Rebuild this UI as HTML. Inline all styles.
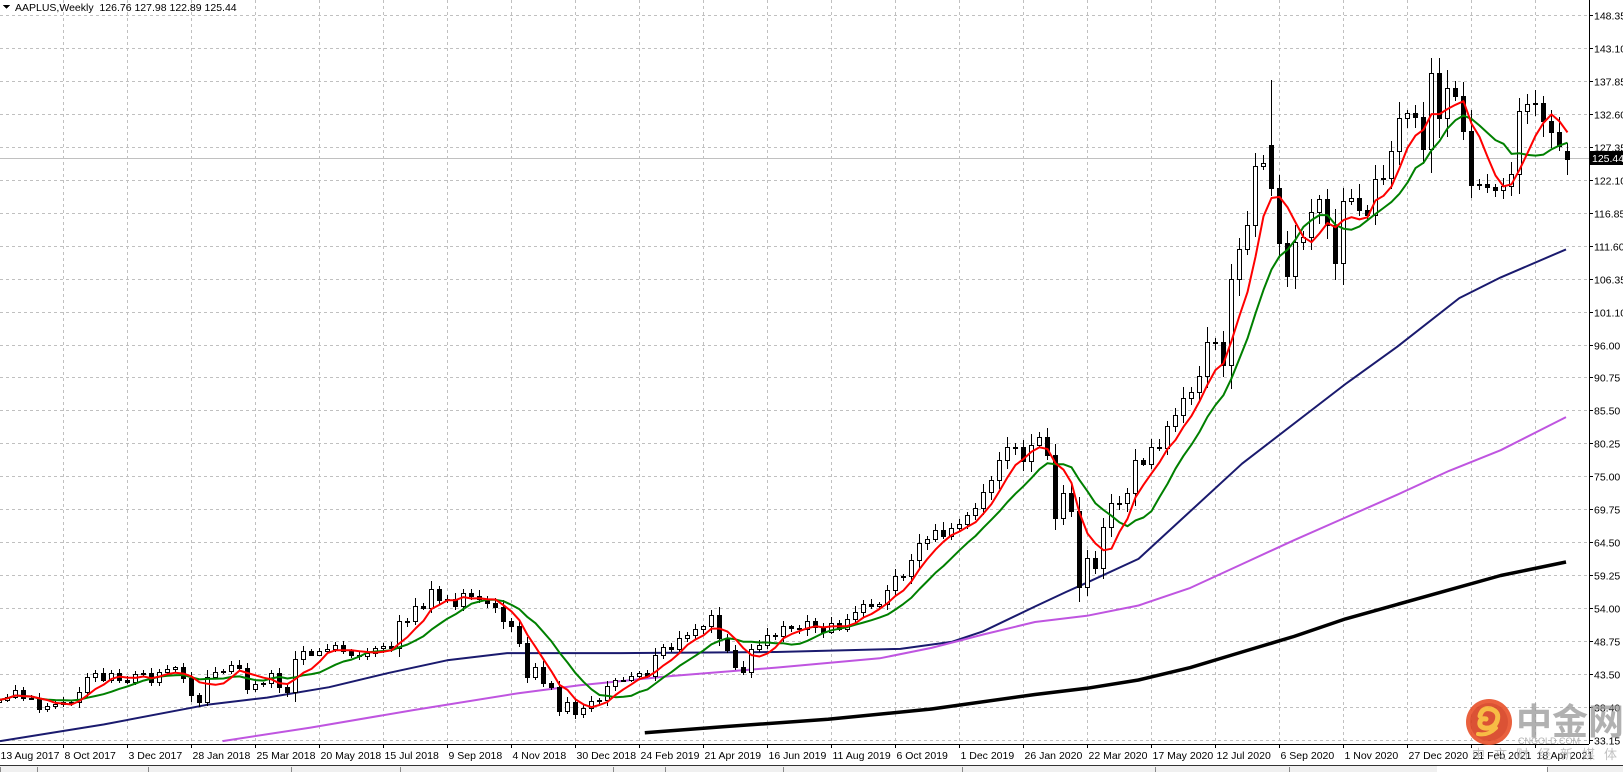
<!DOCTYPE html>
<html><head><meta charset="utf-8">
<style>
html,body{margin:0;padding:0;background:#fff;width:1623px;height:772px;overflow:hidden;font-family:"Liberation Sans",sans-serif}
svg{display:block}
text{font-family:"Liberation Sans",Tahoma,sans-serif;font-size:10.5px}
</style></head><body>
<svg id="s" width="1623" height="772" xmlns="http://www.w3.org/2000/svg" shape-rendering="crispEdges"></svg>
<script>
const C=[39.4,39.9,41.0,39.7,39.7,37.9,38.5,38.8,39.1,39.0,40.7,43.1,43.7,42.5,43.7,42.5,42.3,43.5,43.6,42.3,43.8,44.3,44.6,42.9,40.1,39.1,43.1,43.8,44.0,44.9,44.5,41.2,41.9,42.1,43.6,41.4,40.6,45.9,47.1,46.6,47.1,47.5,48.1,47.2,46.6,46.3,46.9,47.6,47.9,47.7,51.9,51.9,54.4,54.0,57.1,55.3,55.5,54.4,56.4,56.0,55.5,54.8,54.1,51.9,51.1,48.4,43.1,44.6,42.1,41.4,37.7,39.1,37.1,38.1,39.2,39.4,41.6,42.6,42.6,43.2,43.7,43.2,46.5,47.8,47.5,49.3,49.7,50.7,51.1,52.9,49.3,47.3,44.7,43.8,47.5,48.2,49.7,49.5,51.1,50.8,50.6,52.0,51.0,50.2,51.6,50.7,52.2,53.3,54.7,54.4,54.7,56.8,59.1,59.1,61.6,64.4,65.0,66.4,65.4,66.8,67.3,68.8,69.9,72.4,74.4,77.6,79.7,79.6,77.4,80.0,81.2,78.3,68.3,72.3,69.5,57.3,61.9,60.4,66.9,70.7,70.7,72.3,77.5,76.9,79.7,79.5,82.9,84.7,87.4,88.4,91.0,96.3,96.3,92.6,106.3,111.1,115.0,124.4,124.8,120.9,112.0,106.8,112.3,113.0,116.97,119.0,115.0,108.9,118.7,119.3,117.3,116.6,122.3,122.4,126.7,131.97,132.7,132.05,127.1,139.1,131.96,136.8,135.4,129.9,121.3,121.4,121.0,120.5,121.2,123.0,133.0,134.2,134.3,131.5,129.7,127.45,125.44];
const Y=p=>15+(148.35-p)*6.286;
const X=i=>-1+8*i;
const s=document.getElementById('s');
let h='';
const R=1589, B=744;
const prices=["148.35","143.10","137.85","132.60","127.35","122.10","116.85","111.60","106.35","101.10","96.00","90.75","85.50","80.25","75.00","69.75","64.50","59.25","54.00","48.75","43.50","38.40","33.15"];
prices.forEach((p,i)=>{const y=Math.round(15+32.95*i)+0.5;
 if(y<B)h+=`<line x1="0" y1="${y}" x2="${R}" y2="${y}" stroke="#c0c0c0" stroke-dasharray="3,3"/>`;
 h+=`<line x1="${R}" y1="${y}" x2="${R+4}" y2="${y}" stroke="#000"/>`;
 h+=`<text x="${R+5}" y="${y+4}" fill="#000">${p}</text>`;});
const dates=["13 Aug 2017","8 Oct 2017","3 Dec 2017","28 Jan 2018","25 Mar 2018","20 May 2018","15 Jul 2018","9 Sep 2018","4 Nov 2018","30 Dec 2018","24 Feb 2019","21 Apr 2019","16 Jun 2019","11 Aug 2019","6 Oct 2019","1 Dec 2019","26 Jan 2020","22 Mar 2020","17 May 2020","12 Jul 2020","6 Sep 2020","1 Nov 2020","27 Dec 2020","21 Feb 2021","18 Apr 2021"];
dates.forEach((d,k)=>{const x=-1+64*k+0.5;
 if(x>0)h+=`<line x1="${x}" y1="0" x2="${x}" y2="${B}" stroke="#c0c0c0" stroke-dasharray="3,3"/>`;
 h+=`<line x1="${x}" y1="${B}" x2="${x}" y2="${B+4}" stroke="#000"/>`;
 h+=`<text x="${Math.max(0,x+1)}" y="759" fill="#000">${d}</text>`;});
h+=`<line x1="0" y1="158.5" x2="${R}" y2="158.5" stroke="#c0c0c0"/>`;
function sma(n){return C.map((c,i)=>{let a=Math.max(0,i-n+1),s=0;for(let j=a;j<=i;j++)s+=C[j];return s/(i-a+1);});}
function poly(pts,col,w){return `<polyline fill="none" stroke="${col}" stroke-width="${w}" shape-rendering="auto" stroke-linejoin="round" points="${pts.map(p=>p[0].toFixed(1)+','+p[1].toFixed(1)).join(' ')}"/>`;}
const k=1.035;
const navy=[[0,716],[100,700],[200,681],[258,674],[318,664],[376,650],[432,638],[490,631],[600,631],[750,630],[870,627],[920,620],[950,610],[1000,586],[1030,572],[1050,563],[1100,540],[1200,448],[1300,371],[1350,335],[1410,288],[1450,268],[1513,241]].map(p=>[p[0]*k,p[1]*k]);
const purple=[[215,716],[300,703],[400,686],[500,670],[560,662],[650,653],[750,645],[850,636],[900,626],[950,613],[1000,601],[1050,595],[1100,585],[1150,568],[1200,545],[1250,522],[1300,500],[1350,478],[1400,455],[1450,435],[1513,403]].map(p=>[p[0]*k,p[1]*k]);
const black=[[623,708],[700,702],[800,695],[900,685],[1000,671],[1050,665],[1100,657],[1150,645],[1200,630],[1250,615],[1300,598],[1350,584],[1400,570],[1450,556],[1513,543]].map(p=>[p[0]*k,p[1]*k]);
h+=poly(navy,'#1a1a6e',2);
h+=poly(purple,'#bf55e0',2);
h+=poly(black,'#000',3.5);
let cs='';
C.forEach((c,i)=>{let o=i?C[i-1]:39.0;let hi,lo;const r1=((i*37)%11)/11,r2=((i*53)%13)/13;
 hi=Math.max(o,c)+(0.2+0.8*r1)*0.018*c+0.15*Math.abs(c-o);
 lo=Math.min(o,c)-(0.2+0.8*r2)*0.018*c-0.15*Math.abs(c-o);
 if(i==C.length-1){o=126.76;hi=127.98;lo=122.89;}
 if(i==159){o=127.6;hi=137.98;}
 const x=X(i)+0.5;
 cs+=`<line x1="${x}" y1="${Y(hi).toFixed(0)}" x2="${x}" y2="${Y(lo).toFixed(0)}" stroke="#000"/>`;
 let t=Math.round(Y(Math.max(o,c))),b=Math.round(Y(Math.min(o,c)));if(b-t<1)b=t+1;
 if(c>=o)cs+=`<rect x="${X(i)-2+0.5}" y="${t+0.5}" width="4" height="${b-t}" fill="#fff" stroke="#000"/>`;
 else cs+=`<rect x="${X(i)-2}" y="${t}" width="5" height="${b-t+1}" fill="#000"/>`;});
h+=cs;
const m5=sma(5).map((v,i)=>[X(i)+0.5,Y(v)]),m10=sma(10).map((v,i)=>[X(i)+0.5,Y(v)]);
h+=poly(m10,'#008000',2);
h+=poly(m5,'#ff0000',2);
h+=`<line x1="${R+0.5}" y1="0" x2="${R+0.5}" y2="${B}" stroke="#000"/>`;
h+=`<line x1="0" y1="${B+0.5}" x2="${R}" y2="${B+0.5}" stroke="#000"/>`;
h+=`<rect x="${R+1}" y="151" width="34" height="14" fill="#000"/><text x="${R+3}" y="162" fill="#fff">125.44</text>`;
h+=`<polygon points="3,5 10,5 6.5,9" fill="#000"/><text x="15" y="11" fill="#000">AAPLUS,Weekly&#160;&#160;126.76 127.98 122.89 125.44</text>`;
h+=`<line x1="0" y1="765.5" x2="1623" y2="765.5" stroke="#333"/><rect x="0" y="766" width="1623" height="6" fill="#f0f0f0"/>`;
[0,37,148,291,400,613,665,783,962,1155,1289,1437,1547].forEach(x=>{h+=`<line x1="${x+0.5}" y1="767" x2="${x+0.5}" y2="772" stroke="#888"/>`;});
h+=`<rect x="1437" y="766" width="110" height="6" fill="#fff"/>`;
h+=`<g shape-rendering="auto" opacity="0.9"><circle cx="1489" cy="722" r="23" fill="#e8502a"/><circle cx="1489" cy="722" r="19" fill="#d84020"/>
<path d="M1480 716 q2-9 11-7 q9 3 6 12 q-3 8-12 7 q-6-1-5-6 q1-4 6-3" fill="none" stroke="#f7b531" stroke-width="5" stroke-linecap="round"/>
<path d="M1478 734 q10 2 18-6" fill="none" stroke="#f7b531" stroke-width="4" stroke-linecap="round"/>
<text x="1516" y="734" style="font-family:'Noto Sans CJK SC','WenQuanYi Zen Hei',sans-serif;font-size:36px;font-weight:bold" fill="#9a9a9a" opacity="0.85">中金网</text>
<text x="1518" y="744" style="font-size:9px" fill="#aaa">CNGOLD.COM</text>
<text x="1472" y="759" style="font-family:'Noto Sans CJK SC','WenQuanYi Zen Hei',sans-serif;font-size:13px;letter-spacing:9px" fill="#aaa" opacity="0.8">中文财经新媒体</text></g>`;
s.innerHTML=h;
</script>
</body></html>
